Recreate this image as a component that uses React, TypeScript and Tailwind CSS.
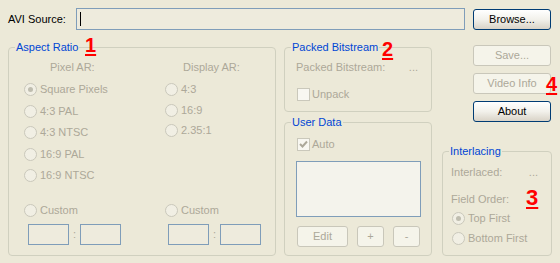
import React from "react";

const muted = "text-[#ACA899]";

function Radio({ label, checked = false }: { label: string; checked?: boolean }) {
  return (
    <div className={`flex items-center gap-[3px] ${muted}`}>
      <span className="w-[13px] h-[13px] rounded-full border border-[#CAC8BB] bg-[#F1EFE4] flex items-center justify-center">
        {checked && <span className="w-[5px] h-[5px] rounded-full bg-[#BFBDAF]" />}
      </span>
      <span>{label}</span>
    </div>
  );
}

function Check({ label, checked = false }: { label: string; checked?: boolean }) {
  return (
    <div className={`flex items-center gap-[2px] ${muted}`}>
      <span className="w-[13px] h-[13px] border border-[#CAC8BB] bg-[#F8F7F1] flex items-center justify-center">
        {checked && (
          <svg width="9" height="9" viewBox="0 0 9 9">
            <path d="M1 4 L3.5 6.5 L8 1.5" stroke="#ACA899" strokeWidth="2" fill="none" />
          </svg>
        )}
      </span>
      <span>{label}</span>
    </div>
  );
}

function Btn({ label, disabled = false, className = "" }: { label: string; disabled?: boolean; className?: string }) {
  return disabled ? (
    <button className={`h-[21px] rounded-[3px] border border-[#C9C7BA] bg-[#F5F4EA] text-[#ACA899] ${className}`}>
      {label}
    </button>
  ) : (
    <button
      className={`h-[21px] rounded-[3px] border border-[#003C74] bg-gradient-to-b from-white via-[#F2F1EB] to-[#D9D3C7] text-black ${className}`}
    >
      {label}
    </button>
  );
}

function Mark({ n, className }: { n: string; className: string }) {
  return (
    <span
      className={`absolute text-[20px] leading-[20px] font-bold text-[#FF0000] underline decoration-2 underline-offset-[2px] ${className}`}
    >
      {n}
    </span>
  );
}

function Group({
  title,
  mark,
  className = "",
  children,
}: {
  title: string;
  mark?: React.ReactNode;
  className?: string;
  children: React.ReactNode;
}) {
  return (
    <fieldset className={`border border-[#D0D0BF] rounded-[4px] ${className}`}>
      <legend className="relative ml-[6px] px-[1px] leading-[13px] text-[#0046D5]">
        {title}
        {mark}
      </legend>
      {children}
    </fieldset>
  );
}

function Field() {
  return <div className="w-[41px] h-[21px] border border-[#7F9DB9] bg-[#EEEBDD]" />;
}

export default function App() {
  return (
    <div className="w-[560px] h-[263px] bg-[#ECE9D8] px-[8px] pt-[8px] font-['Liberation_Sans',Arial,sans-serif] text-[11px] leading-[13px] text-black overflow-hidden">
      <div className="flex items-start">
        <div className="w-[68px] h-[22px] flex items-center">AVI Source:</div>
        <div className="w-[389px] h-[22px] border border-[#7F9DB9] bg-[#EEEBDD] flex items-center pl-[3px]">
          <span className="w-[1px] h-[14px] bg-black" />
        </div>
        <Btn label="Browse..." className="ml-[8px] mt-[1px] w-[78px]" />
      </div>

      <div className="flex mt-[11px]">
        <Group
          title="Aspect Ratio"
          mark={<Mark n="1" className="left-[70px] top-[-6px]" />}
          className="w-[268px] h-[215px]"
        >
          <div className="pl-[15px] pt-[7px]">
            <div className="grid grid-cols-[141px_1fr]">
              <div className="flex flex-col">
                <div className={`pl-[26px] ${muted}`}>Pixel AR:</div>
                <div className="mt-[5px]">
                  {["Square Pixels", "4:3 PAL", "4:3 NTSC", "16:9 PAL", "16:9 NTSC"].map((l, i) => (
                    <div key={l} className="h-[21.5px] flex items-center">
                      <Radio label={l} checked={i === 0} />
                    </div>
                  ))}
                </div>
              </div>
              <div className="flex flex-col">
                <div className={`pl-[18px] ${muted}`}>Display AR:</div>
                <div className="mt-[5.5px]">
                  {["4:3", "16:9", "2.35:1"].map((l) => (
                    <div key={l} className="h-[20.5px] flex items-center">
                      <Radio label={l} />
                    </div>
                  ))}
                </div>
              </div>
            </div>
            <div className="grid grid-cols-[141px_1fr] mt-[12.75px]">
              <div>
                <div className="h-[21.5px] flex items-center">
                  <Radio label="Custom" />
                </div>
                <div className="flex items-center mt-[3.25px] pl-[4px]">
                  <Field />
                  <span className={`w-[11px] text-center ${muted}`}>:</span>
                  <Field />
                </div>
              </div>
              <div>
                <div className="h-[21.5px] flex items-center">
                  <Radio label="Custom" />
                </div>
                <div className="flex items-center mt-[3.25px] pl-[3px]">
                  <Field />
                  <span className={`w-[11px] text-center ${muted}`}>:</span>
                  <Field />
                </div>
              </div>
            </div>
          </div>
        </Group>

        <div className="ml-[8px] w-[148px] flex flex-col">
          <Group
            title="Packed Bitstream"
            mark={<Mark n="2" className="left-[91px] top-[-2px]" />}
            className="h-[71px]"
          >
            <div className={`flex mt-[6.5px] pl-[11px] pr-[13px] ${muted}`}>
              <span>Packed Bitstream:</span>
              <span className="ml-auto">...</span>
            </div>
            <div className="mt-[14.5px] pl-[12px]">
              <Check label="Unpack" />
            </div>
          </Group>
          <Group title="User Data" className="h-[140px] mt-[4px]">
            <div className="mt-[9px] pl-[12px]">
              <Check label="Auto" checked />
            </div>
            <div className="mt-[10px] ml-[11px] w-[125px] h-[56px] border border-[#7F9DB9] bg-[#F4F3EC]" />
            <div className="mt-[9px] ml-[12px] flex gap-[9px]">
              <Btn label="Edit" disabled className="w-[51px]" />
              <Btn label="+" disabled className="w-[27px]" />
              <Btn label="-" disabled className="w-[27px]" />
            </div>
          </Group>
        </div>

        <div className="ml-[10px] w-[110px] flex flex-col">
          <Btn label="Save..." disabled className="ml-[31px] mt-[4px] w-[78px]" />
          <div className="relative ml-[31px] mt-[7px] w-[78px]">
            <Btn label="Video Info" disabled className="w-[78px]" />
            <Mark n="4" className="left-[73px] top-[1px]" />
          </div>
          <Btn label="About" className="ml-[31px] mt-[7px] w-[78px]" />
          <Group
            title="Interlacing"
            mark={<Mark n="3" className="left-[77px] top-[42px] text-[22px] leading-[22px]" />}
            className="h-[111px] mt-[23px]"
          >
            <div className={`flex mt-[7.5px] pl-[8px] pr-[13px] ${muted}`}>
              <span>Interlaced:</span>
              <span className="ml-auto">...</span>
            </div>
            <div className={`mt-[14px] pl-[8px] ${muted}`}>Field Order:</div>
            <div className="mt-[6px] pl-[9px]">
              <Radio label="Top First" checked />
            </div>
            <div className="mt-[7px] pl-[9px]">
              <Radio label="Bottom First" />
            </div>
          </Group>
        </div>
      </div>
    </div>
  );
}
